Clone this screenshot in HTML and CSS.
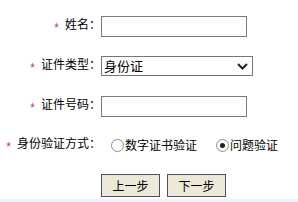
FILE: index.html
```html
<!DOCTYPE html>
<html lang="zh">
<head>
<meta charset="utf-8">
<link rel="stylesheet" href="styles.css">
</head>
<body>
<div class="page">
  <form class="form">
    <div class="row">
      <label class="label"><span class="req">*</span>姓名：</label>
      <div class="field"><input class="text" type="text"></div>
    </div>
    <div class="row">
      <label class="label"><span class="req">*</span>证件类型：</label>
      <div class="field select-wrap">
        <select class="select"><option>身份证</option></select>
        <svg class="chev" width="11" height="7" viewBox="0 0 11 7"><polyline points="1,1 5.5,5.5 10,1" fill="none" stroke="#222" stroke-width="2"/></svg>
      </div>
    </div>
    <div class="row">
      <label class="label"><span class="req">*</span>证件号码：</label>
      <div class="field"><input class="text" type="text"></div>
    </div>
    <div class="row row-radio">
      <label class="label"><span class="req">*</span>身份验证方式：</label>
      <div class="field radios">
        <label class="opt"><input class="radio" type="radio" name="m">数字证书验证</label>
        <label class="opt"><input class="radio" type="radio" name="m" checked>问题验证</label>
      </div>
    </div>
    <div class="row-buttons">
      <button class="btn" type="button">上一步</button>
      <button class="btn" type="button">下一步</button>
    </div>
  </form>
  <div class="strip"></div>
</div>
</body>
</html>
```

FILE: styles.css
```css
html, body {
  margin: 0;
  padding: 0;
  background: #ffffff;
}
body {
  font-family: "Noto Sans CJK SC", "Liberation Sans", sans-serif;
  font-size: 12px;
  color: #000;
  width: 298px;
  height: 202px;
  overflow: hidden;
}
.page {
  height: 202px;
  display: flex;
  flex-direction: column;
}
.form {
  flex: 1;
  padding-top: 6px;
}
.row {
  display: flex;
  align-items: center;
  height: 40px;
}
.row-radio {
  height: 38px;
}
.label {
  width: 101px;
  flex: none;
  text-align: right;
  white-space: nowrap;
  line-height: 14px;
}
.req {
  color: #c8324f;
  font-family: "Liberation Sans", sans-serif;
  font-size: 12px;
  vertical-align: -3px;
  margin-right: 6px;
}
.field {
  display: flex;
  align-items: center;
}
.text {
  box-sizing: border-box;
  width: 146px;
  height: 21px;
  margin: 0;
  padding: 0 2px;
  border: 1px solid #7a7a7a;
  background: #fff;
  font-family: inherit;
  font-size: 12px;
}
.select-wrap {
  position: relative;
}
.select {
  appearance: none;
  -webkit-appearance: none;
  box-sizing: border-box;
  width: 152px;
  height: 20px;
  margin: 0;
  padding: 0 0 0 2px;
  border: 1px solid #767676;
  border-radius: 0;
  background: #fff;
  color: #000;
  font-family: "Noto Sans CJK SC", sans-serif;
  font-size: 13px;
  line-height: 18px;
}
.chev {
  position: absolute;
  right: 5px;
  top: 7px;
  pointer-events: none;
}
.radios {
  padding-left: 10px;
  gap: 19px;
}
.opt {
  display: flex;
  align-items: center;
  line-height: 14px;
}
.radio {
  appearance: none;
  -webkit-appearance: none;
  box-sizing: border-box;
  width: 13px;
  height: 13px;
  margin: 0 1px 0 0;
  border: 1px solid #8c8c8c;
  border-radius: 50%;
  background: #fff;
  display: grid;
  place-items: center;
}
.radio:checked::after {
  content: "";
  width: 5px;
  height: 5px;
  border-radius: 50%;
  background: #1e1e1e;
}
.row-buttons {
  display: flex;
  gap: 7px;
  padding-left: 101px;
  margin-top: 10px;
}
.btn {
  box-sizing: border-box;
  width: 59px;
  height: 23px;
  margin: 0;
  padding: 0;
  border: 1px solid #4e4d6a;
  border-radius: 0;
  background: #ece9d8;
  color: #000;
  font-family: "Noto Sans CJK SC", sans-serif;
  font-size: 12px;
}
.strip {
  height: 3px;
  background: #eef1f7;
}
```
